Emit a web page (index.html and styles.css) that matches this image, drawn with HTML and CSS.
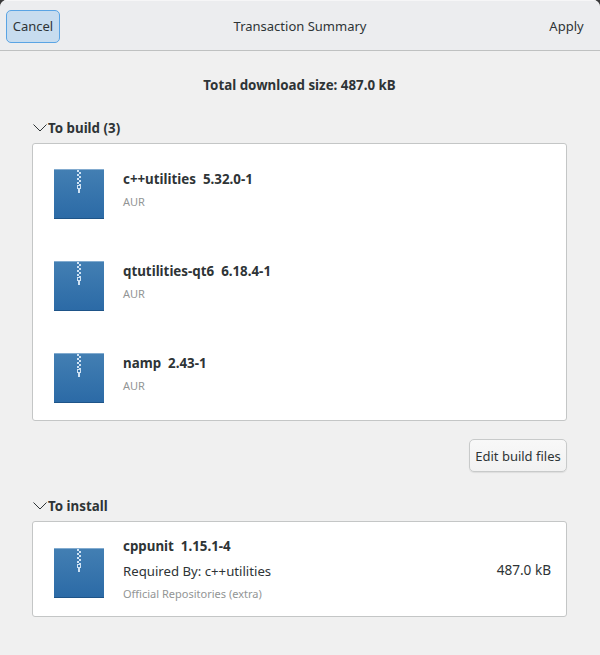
FILE: index.html
```html
<!DOCTYPE html>
<html lang="en">
<head>
<meta charset="utf-8">
<title>Transaction Summary</title>
<link rel="stylesheet" href="styles.css">
</head>
<body>
<div class="window">
  <header class="headerbar">
    <button class="btn btn-cancel">Cancel</button>
    <div class="title">Transaction Summary</div>
    <button class="btn btn-flat">Apply</button>
  </header>
  <main class="content">
    <div class="total">Total download size: 487.0 kB</div>

    <div class="expander">
      <svg class="chev" width="14" height="8" viewBox="0 0 14 8"><path d="M0.5 0.5 L7 7 L13.5 0.5" fill="none" stroke="#2e3436" stroke-width="1"/></svg>
      <span>To build (3)</span>
    </div>
    <section class="card">
      <div class="row">
        <svg class="pkg" width="50" height="50" viewBox="0 0 50 50"><use href="#zip"/></svg>
        <div class="info">
          <div class="name"><span>c++utilities</span><span>5.32.0-1</span></div>
          <div class="repo">AUR</div>
        </div>
      </div>
      <div class="row">
        <svg class="pkg" width="50" height="50" viewBox="0 0 50 50"><use href="#zip"/></svg>
        <div class="info">
          <div class="name"><span>qtutilities-qt6</span><span>6.18.4-1</span></div>
          <div class="repo">AUR</div>
        </div>
      </div>
      <div class="row">
        <svg class="pkg" width="50" height="50" viewBox="0 0 50 50"><use href="#zip"/></svg>
        <div class="info">
          <div class="name"><span>namp</span><span>2.43-1</span></div>
          <div class="repo">AUR</div>
        </div>
      </div>
    </section>

    <div class="actions"><button class="btn btn-edit">Edit build files</button></div>

    <div class="expander">
      <svg class="chev" width="14" height="8" viewBox="0 0 14 8"><path d="M0.5 0.5 L7 7 L13.5 0.5" fill="none" stroke="#2e3436" stroke-width="1"/></svg>
      <span>To install</span>
    </div>
    <section class="card">
      <div class="row row-install">
        <svg class="pkg" width="50" height="50" viewBox="0 0 50 50"><use href="#zip"/></svg>
        <div class="info info-install">
          <div class="name"><span>cppunit</span><span>1.15.1-4</span></div>
          <div class="req">Required By: c++utilities</div>
          <div class="repo">Official Repositories (extra)</div>
        </div>
        <div class="size">487.0 kB</div>
      </div>
    </section>
  </main>
</div>
<svg class="defs" width="0" height="0">
  <defs>
    <linearGradient id="zipfill" x1="0" y1="0" x2="0" y2="1">
      <stop offset="0" stop-color="#437fb3"/>
      <stop offset="1" stop-color="#2b6aa6"/>
    </linearGradient>
    <g id="zip">
      <rect width="50" height="50" fill="url(#zipfill)"/>
      <rect width="50" height="1" fill="#82abcf"/>
      <rect y="49" width="50" height="1" fill="#1e5488"/>
      <g fill="#cfe2f3">
        <rect x="23" y="1" width="2" height="2"/><rect x="25" y="3" width="2" height="2"/>
        <rect x="23" y="5" width="2" height="2"/><rect x="25" y="7" width="2" height="2"/>
        <rect x="23" y="9" width="2" height="2"/><rect x="25" y="11" width="2" height="2"/>
        <rect x="23" y="13" width="2" height="2"/><rect x="25" y="15" width="2" height="1"/>
        <rect x="24" y="20" width="2" height="4"/>
      </g>
      <rect x="23.5" y="16.5" width="3" height="3" fill="none" stroke="#cfe2f3"/>
    </g>
  </defs>
</svg>
</body>
</html>
```
FILE: styles.css
```css
* { box-sizing: border-box; }
html, body { margin: 0; padding: 0; background: #3a3a3a; }
body { width: 600px; height: 655px; overflow: hidden; font-family: "Noto Sans", sans-serif; font-size: 13px; color: #2e3436; }
.window { width: 600px; height: 655px; background: #f0f0f0; border-radius: 7px 7px 0 0; overflow: hidden; }
.headerbar { height: 51px; padding: 9px 6px 8px; display: flex; align-items: center; justify-content: space-between; background: #ecedef; border-top: 1px solid #f6f6f7; border-bottom: 1px solid #bfc1c1; }
.title { color: #2e3436; position: relative; left: -3px; }
.btn { font: inherit; color: #2e3436; border-radius: 5px; height: 33px; padding: 0; background: none; border: 1px solid transparent; }
.btn-cancel { width: 54px; background: #c7dcef; border-color: #5aa4e4; }
.btn-flat { width: 48px; padding-right: 7px; text-align: center; }
.content { padding: 0 33px 0 32px; }
.total { height: 17px; margin-top: 25px; text-align: center; font-weight: 700; font-size: 13.33px; }
.expander { display: flex; align-items: center; height: 18px; font-weight: 700; font-size: 13.33px; margin-top: 26px; }
.expander + .card { margin-top: 6px; }
.chev { margin: 0 1px 0 1px; flex: none; }
.card { background: #fff; border: 1px solid #c4c6c6; border-radius: 3px; }
.row { height: 92px; padding-left: 21px; display: flex; align-items: center; }
.row-install { height: 94px; padding-right: 15px; }
.pkg { flex: none; display: block; position: relative; top: 4px; }
.info { margin-left: 19px; flex: 1; padding-bottom: 2px; }
.name { font-weight: 700; font-size: 13.33px; display: flex; gap: 7px; line-height: 18px; }
.repo { font-size: 11px; color: #929595; line-height: 15px; margin-top: 6px; }
.req { margin-top: 7px; line-height: 18px; font-size: 13.2px; }
.info-install { padding-bottom: 0; }
.size { align-self: center; font-size: 13.6px; }
.actions { display: flex; justify-content: flex-end; margin-top: 18px; }
.btn-edit { width: 98px; height: 33px; background: linear-gradient(#f8f8f8, #f2f2f2); border-color: #c8caca; box-shadow: 0 1px 1px rgba(0,0,0,.08); }
.actions + .expander { margin-top: 25px; }
.defs { position: absolute; }
```
